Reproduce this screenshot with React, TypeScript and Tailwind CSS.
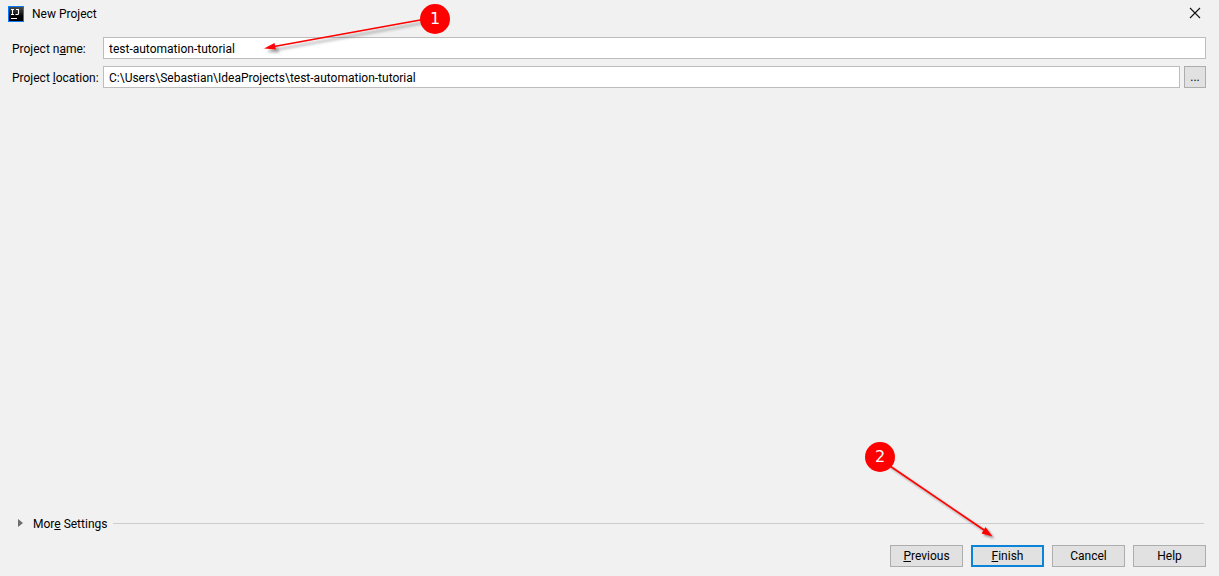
import { useState } from "react";

const buttonClass =
  "h-[22px] w-[73px] border border-[#adadad] bg-[#e1e1e1] text-center leading-5";
const fieldClass =
  "h-[22px] w-full min-w-0 border border-[#bdbdbd] bg-white px-[5px] pt-[2px] outline-none";
const labelClass = "whitespace-nowrap pt-[2px]";
const badgeClass =
  "absolute flex size-[30px] items-center justify-center rounded-full bg-[#fe0000] font-['DejaVu_Sans',sans-serif] text-base text-white";

function AppLogo() {
  return (
    <svg width="16" height="16" viewBox="0 0 16 16" aria-hidden="true">
      <defs>
        <linearGradient id="logo-fill" x1="0" y1="0" x2="0" y2="1">
          <stop offset="0" stopColor="#4a4a4a" />
          <stop offset="0.7" stopColor="#000" />
        </linearGradient>
      </defs>
      <rect width="16" height="16" fill="#087cfa" />
      <rect x="1" y="1" width="14" height="14" fill="url(#logo-fill)" />
      <path
        d="M3 3.5h3M4.500 3.500v5M3 8.500h3M8 3.500h2.500v4q0 1-1 1H7.500M3 12.500h6"
        fill="none"
        stroke="#fff"
        strokeWidth="1.1"
      />
    </svg>
  );
}

function NameCallout() {
  return (
    <div className="pointer-events-none absolute bottom-full left-[157px] -mb-[22px] h-[55px] w-[190px]">
      <svg className="block" width="190" height="60" viewBox="0 0 190 60" aria-hidden="true">
        <defs>
          <filter id="name-shadow" x="-20%" y="-40%" width="140%" height="200%">
            <feDropShadow dx="3" dy="3" stdDeviation="1.6" floodColor="#000" floodOpacity="0.4" />
          </filter>
        </defs>
        <g filter="url(#name-shadow)">
          <path d="M163 15.500 14 42.500" stroke="#f00" strokeWidth="1.6" />
          <path d="M4 44.500 14.500 39 16 45.500Z" fill="#f00" />
        </g>
      </svg>
      <span className={badgeClass + " top-0 right-0"}>1</span>
    </div>
  );
}

function FinishCallout() {
  return (
    <div className="pointer-events-none absolute right-[39px] bottom-0 h-[125px] w-[140px]">
      <svg className="block" width="140" height="104" viewBox="0 0 140 104" aria-hidden="true">
        <defs>
          <filter id="finish-shadow" x="-20%" y="-20%" width="140%" height="140%">
            <feDropShadow dx="2" dy="2" stdDeviation="0.9" floodColor="#000" floodOpacity="0.4" />
          </filter>
        </defs>
        <g filter="url(#finish-shadow)">
          <path d="M22 22 119 88" stroke="#f00" strokeWidth="1.6" />
          <path d="M127.500 94.500 116.500 91.500 120.500 85Z" fill="#f00" />
        </g>
      </svg>
      <span className={badgeClass + " top-0 left-0"}>2</span>
    </div>
  );
}

export default function App() {
  const [name, setName] = useState("test-automation-tutorial");
  const [location, setLocation] = useState(
    "C:\\Users\\Sebastian\\IdeaProjects\\test-automation-tutorial",
  );

  return (
    <main className="flex min-h-screen flex-col bg-[#f1f1f1] font-['Roboto',sans-serif] text-xs text-black">
      <header className="flex h-7 items-center gap-2 pr-[18px] pl-2">
        <AppLogo />
        <h1 className="flex-1">New Project</h1>
        <button type="button" aria-label="Close">
          <svg className="mb-[2px]" width="12" height="12" viewBox="0 0 12 12" aria-hidden="true">
            <path d="M1 1l10 10M11 1 1 11" stroke="#111" strokeWidth="1.1" />
          </svg>
        </button>
      </header>

      <form className="flex flex-1 flex-col pt-[9px] pr-[13px] pb-[9px] pl-3">
        <div className="grid grid-cols-[86px_1fr] items-center gap-x-[5px] gap-y-[7px]">
          <label htmlFor="project-name" className={labelClass}>
            Project n<u>a</u>me:
          </label>
          <div className="relative">
            <input
              id="project-name"
              className={fieldClass + " block"}
              value={name}
              onChange={(e) => setName(e.target.value)}
            />
            <NameCallout />
          </div>
          <label htmlFor="project-location" className={labelClass}>
            Project <u>l</u>ocation:
          </label>
          <div className="flex gap-1">
            <input
              id="project-location"
              className={fieldClass}
              value={location}
              onChange={(e) => setLocation(e.target.value)}
            />
            <button
              type="button"
              aria-label="Browse"
              className="h-[22px] w-[22px] shrink-0 border border-[#adadad] bg-[#e1e1e1] leading-5"
            >
              ...
            </button>
          </div>
        </div>

        <div className="mt-auto flex items-center gap-[6px] pr-[2px] pl-[6px]">
          <button type="button" className="flex items-center gap-[10px]">
            <svg width="5" height="8" viewBox="0 0 5 8" aria-hidden="true">
              <path d="M0 0 5 4 0 8Z" fill="#6e6e6e" />
            </svg>
            <span className="pt-[2px]">
              Mor<u>e</u> Settings
            </span>
          </button>
          <hr className="flex-1 border-[#cdcdcd]" />
        </div>

        <div className="mt-[13px] flex justify-end gap-2">
          <button type="button" className={buttonClass}>
            <u>P</u>revious
          </button>
          <div className="relative">
            <button
              type="button"
              className="block h-[22px] w-[73px] border-2 border-[#0a84d8] bg-[#e1e1e1] text-center leading-[18px]"
            >
              <u>F</u>inish
            </button>
            <FinishCallout />
          </div>
          <button type="button" className={buttonClass}>
            Cancel
          </button>
          <button type="button" className={buttonClass}>
            Help
          </button>
        </div>
      </form>
    </main>
  );
}
